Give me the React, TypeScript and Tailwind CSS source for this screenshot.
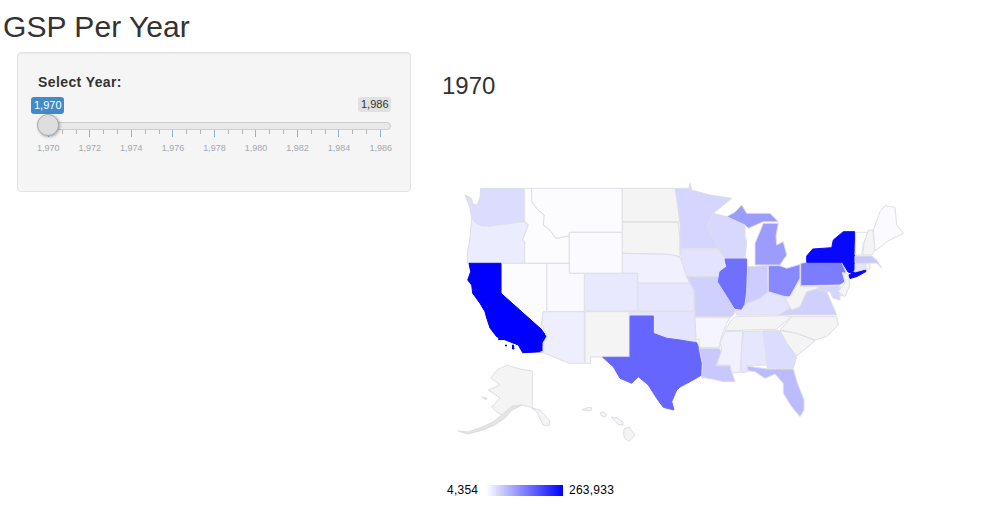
const years = ["1,970", "1,972", "1,974", "1,976", "1,978", "1,980", "1,982", "1,984", "1,986"];
const ticks = Array.from({ length: 25 }, (_, i) => i);

type Region = { id: string; fill: string; points: string; solid?: boolean };

// page coordinates, the svg viewBox below starts at the map's corner
const regions: Region[] = [
  { id: "WA", fill: "#dcdcff", points: "465,195 471,198 473,204 477,205 480,198 480.7,188.3 524,188.3 524,221.7 505,224 490,226 481.7,226 476,223 471.7,218 470,208" },
  { id: "OR", fill: "#ececff", points: "471.7,218 476,223 481.7,226 490,226 505,224 524,221.7 528.3,225 522.7,240 524.7,241.7 524.7,263.3 467.3,263.3 467.3,253.3 470,238" },
  { id: "ID", fill: "#fcfcff", points: "524.7,188.3 531.7,188.3 531.7,201.7 538,210 544.3,215 543.3,225 550,230 556,238.3 569.3,235.7 569.3,263.3 524.7,263.3 524.7,241.7 522.7,240 528.3,225 524.7,221" },
  { id: "MT", fill: "#fcfcff", points: "531.7,188.3 622.3,188.3 622.3,232.3 569.3,232.3 569.3,235.7 556,238.3 550,230 543.3,225 544.3,215 538,210 531.7,201.7" },
  { id: "WY", fill: "#fbfbff", points: "569.3,232.3 622.3,232.3 622.3,273.3 569.3,273.3" },
  { id: "ND", fill: "#f4f4f4", points: "622.3,188.3 675,188.3 677,200 680,221.7 622.3,221.7" },
  { id: "SD", fill: "#f4f4f4", points: "622.3,222.3 678.3,222.3 680,240 680,256.7 673,255 666.7,254.3 622.3,253.3" },
  { id: "NE", fill: "#f0f0ff", points: "622.3,253.3 666.7,254.3 673,255 680,257.7 684,265 687,277 690,283.3 637.7,283.3 637.7,273.3 622.3,273.3" },
  { id: "KS", fill: "#e6e6ff", points: "637.7,283.3 690,283.3 694,290 694,311 637.7,311" },
  { id: "CO", fill: "#e8e8ff", points: "584.3,273.3 637.7,273.3 637.7,311 584.3,311" },
  { id: "UT", fill: "#f9f9ff", points: "546.7,263.3 569.3,263.3 569.3,273.3 584.3,273.3 584.3,311.7 546.7,311.7" },
  { id: "NV", fill: "#fcfcff", points: "501,263.3 546.7,263.3 546.7,311.7 543,312 541.7,323 541,329 501,293.3" },
  { id: "CA", fill: "#0000ff", solid: true, points: "469,263.3 501,263.3 501,293.3 541,329 546.7,336.7 543,343 542.7,351.7 522.7,352.7 518.3,345 508,341 496.7,336.7 490,328 486.7,318 485,311.7 480,303.3 472.7,293.3 471.7,285 467.7,280 470.7,271.7" },
  { id: "CA1", fill: "#0000ff", solid: true, points: "498.5,338.5 504,338.5 504,339.5 498.5,339.5" },
  { id: "CA2", fill: "#0000ff", solid: true, points: "505.5,345 506.5,345 506.5,346 505.5,346" },
  { id: "CA3", fill: "#0000ff", solid: true, points: "512.5,345 513.5,345 514,349 512.5,349" },
  { id: "AZ", fill: "#eeeeff", points: "546.7,311.7 584.3,311.7 584.3,363.3 569.3,363.3 540.7,351.7 543,351.7 543,343 546.7,336.7 541.7,323.3 543,312" },
  { id: "NM", fill: "#f4f4f4", points: "585,311.7 629.3,311.7 629.3,356.7 590.7,357 590.7,363.3 585,363.3" },
  { id: "OK", fill: "#e4e4ff", points: "630,311.7 694,311.7 695,317.7 696,342 690,341.7 678,340 666.7,338.3 653.3,333.3 653.3,316 630,316" },
  { id: "TX", fill: "#6666ff", solid: true, points: "630,316 653.3,316 653.3,333.3 666.7,338.3 680,340 690,341.7 696.7,342.7 699,348 702,363 701.7,375 690,381.7 680,387 676.7,390 671.7,401.7 674,410 663.3,407.3 656.7,398.3 648.3,385 638.3,376.7 631.7,383.3 620,378.3 613.3,366.7 602.7,357.3 630,357.3" },
  { id: "MN", fill: "#d5d5ff", points: "675,188.3 689,188.3 690,183.3 691.7,190 710,195 731.7,198.3 713.3,213.3 707.3,226.7 712,235 718.3,248.3 680,248.3 680,221.7 677,200" },
  { id: "IA", fill: "#e3e3ff", points: "680,249 718.3,249 725,258.3 726.7,266.7 720,271.7 718.3,276.7 686.7,276.7 681.7,261.7" },
  { id: "MO", fill: "#d0d0ff", points: "686.7,276.7 718.3,276.7 718.3,281.7 726.7,295 735,308.3 735,312 733.3,315 730,318 730,316.7 695,316.7 694,290" },
  { id: "AR", fill: "#f5f5ff", points: "695,317.7 730,317.7 726.7,323.3 722,335 719.3,347.3 699,347.3 699,339.3 696,339.3" },
  { id: "LA", fill: "#c8c8ff", points: "699,348.3 719.3,348.3 721.7,353.3 716,365.7 730,365.7 731.7,372 735,381.7 723.3,381.7 712,379 701.7,377.3 702.3,363.3" },
  { id: "WI", fill: "#d8d8ff", points: "713.3,213.3 726.7,216.7 745,225 745,236.7 746.7,241.7 745,258.3 725,258.3 718.3,248.3 712,235 707.3,226.7" },
  { id: "MIU", fill: "#9c9cff", points: "726.7,216.7 735,212 741.7,205 746.7,213.3 770,213.3 778.3,221.7 763.3,221.7 748.3,228.3 745,225" },
  { id: "MIL", fill: "#9c9cff", points: "755,265 755,243.3 763.3,223.3 778.3,223.3 776,236 776.7,245 783.3,241.7 786.7,255 780,265" },
  { id: "IL", fill: "#7070ff", solid: true, points: "725,259 746.7,259 746.7,291.7 745,304 741.7,310 735,308.3 726.7,295 718.3,281.7 720,271.7 726.7,266.7" },
  { id: "IN", fill: "#ccccff", points: "747.7,266.7 767.3,265.7 768.3,291.7 760,298.3 745,304.3 746.7,291.7" },
  { id: "OH", fill: "#8888ff", points: "768.3,265.7 780,265.7 786.7,268.3 800,264.3 800,278.3 790,296.7 785,296.7 768.3,291.7" },
  { id: "KY", fill: "#e4e4ff", points: "745,304.3 760,299 768.3,292 785,298 790,308 778.3,315 736.7,315 735,310 741.7,310" },
  { id: "TN", fill: "#f4f4f4", points: "730,321.7 735,316.7 783.3,315.7 791.7,316.7 780,326 776.7,329.3 725,330.7" },
  { id: "NC", fill: "#f4f4f4", points: "791.7,316.7 836.7,316.7 838.3,325 826.7,336.7 815,340 796.7,333.3 780,330" },
  { id: "SC", fill: "#f4f4f4", points: "780,330.7 796.7,333.3 815,340.7 796.7,356 786.7,343.3" },
  { id: "GA", fill: "#dcdcff", points: "762.7,330.7 779.3,330.7 786.7,343.3 796.7,356.7 793.3,368.3 767.3,368.3 766,353.3" },
  { id: "AL", fill: "#e6e6ff", points: "743.3,331.7 762.7,331 766,353.3 766.7,365 746.7,365.7 748.3,371.7 741.7,372.7 740.7,356.7" },
  { id: "MS", fill: "#f0f0ff", points: "725,331.7 742.7,331 740,372.7 731.7,372.7 730,365 716.7,365 721.7,350 720,342" },
  { id: "FL", fill: "#bbbbff", points: "746.7,366 767.3,369 793.3,369 797,382 804,400 804,410 800,416.7 791.7,406.7 783.3,393.3 783.3,383.3 775,374 765,378.3 755,371.7 748.3,370.7" },
  { id: "VA", fill: "#d0d0ff", points: "778.3,315 790,308.3 797,308 806.7,292 816.7,288.3 826.7,291.7 833.3,306.7 836.7,315" },
  { id: "WV", fill: "#f4f4f4", points: "800,279 800.7,286.7 818.3,286.7 816.7,289 806.7,291.7 800,306.7 791.7,310 785,298.3 790,296.7" },
  { id: "PA", fill: "#7c7cff", points: "800.7,263.3 806.7,262.3 841.7,262.3 845.7,271.7 845,281.7 840,285 800.7,285.7" },
  { id: "MD", fill: "#d4d4ff", points: "818.3,286.7 839,285.7 840,300 833,298 830,291.7 818.3,290" },
  { id: "DE", fill: "#e8e8ff", points: "840,285.7 843,295.7 839,295.7" },
  { id: "NJ", fill: "#f4f4f4", points: "842.3,272.3 848.3,274.3 850,285 845,296.7 838.3,291.7 845,282.3" },
  { id: "NY", fill: "#0808ff", solid: true, points: "806.7,262.3 806.7,256 812.7,249 831.7,247.7 833.3,240 843.3,231.7 854.7,231.7 854.7,269 852,273 848,272 842.3,262.3" },
  { id: "LI", fill: "#0808ff", solid: true, points: "849,275 853,272.5 865.7,270 866,271.5 857,276.5 850,278.5" },
  { id: "VT", fill: "#ffffff", points: "855.7,232.3 868.3,232.3 863.3,243.3 861.7,255 855,255" },
  { id: "NH", fill: "#f4f4f4", points: "868.3,230 873,230 875,250 871.7,255 862.7,255 864,243" },
  { id: "ME", fill: "#fafaff", points: "873.3,230 880,211.7 885,205.7 895,207.3 896.7,225 903.3,233.3 886.7,241.7 876.7,250 875,250" },
  { id: "MA", fill: "#c8c8ff", points: "855,256 871.7,256 876.7,260 881.7,268 876.7,263 855,263.3" },
  { id: "CT", fill: "#e4e4ff", points: "855,263.7 865.7,263.7 865.7,269 855,272" },
  { id: "RI", fill: "#f4f4f4", points: "865.7,263.7 870,263.7 870,269 865.7,269" },
  { id: "AK", fill: "#f4f4f4", points: "506.7,365 520,369 532.3,371 532.3,408 540,410 550,421 549,426 543,425 537,412 530,407 522,405 510,411 505,416 498,413 491.7,407 500,398 488.3,390 500,385 490.7,378 497,370" },
  { id: "AK2", fill: "#e4e4e4", points: "522,405 512,410 505,418 495,425 483,430 468,434 458,431 468,432 482,427 493,422 503,414 512,406" },
  { id: "AK3", fill: "#e4e4e4", points: "482,397 487,398 486,400" },
  { id: "HI1", fill: "#f4f4f4", points: "582,409.5 586,408.5 588,407.3 591.7,407.8 591,410.5 587,410.7" },
  { id: "HI2", fill: "#f4f4f4", points: "600,413 604,412 606.7,415 605,417 601,415.5" },
  { id: "HI3", fill: "#f4f4f4", points: "611,417 617,418 623,422 623,425 618,424.5 614,420" },
  { id: "HI4", fill: "#f4f4f4", points: "624,429 629,427 635,435 629,441.5 624.5,438 623.5,434" },
];

function Slider() {
  return (
    <div className="relative mt-[5px]">
      <div className="flex justify-between">
        <span className="rounded-[3px] bg-[#428bca] px-[3px] h-[17px] w-[33px] -ml-[7px] text-[11px] leading-[16px] text-center text-white">1,970</span>
        <span className="rounded-[3px] bg-[#e1e1e1] px-[3px] h-[15px] w-[33px] text-[11px] leading-[15px] text-center text-[#333]">1,986</span>
      </div>
      <div className="mt-[8px] h-[8px] rounded-[4px] border border-[#cccccc] bg-[#e9e9e9]" />
      <div className="absolute left-[-1px] top-[17px] h-[22px] w-[22px] rounded-full border border-[#ababab] bg-[#dedede] shadow-[1px_1px_3px_rgba(0,0,0,0.3)]" />
      <div className="ml-[10px] mr-[10px] flex h-[7px] justify-between">
        {ticks.map((t) => (
          <div key={t} className={t % 3 === 0 ? "h-[7px] w-px bg-[#8db4d8]" : "h-[4px] w-px bg-[#b5b5b5]"} />
        ))}
      </div>
      <div className="ml-[-1px] mr-[-1px] mt-[4px] flex justify-between text-[9px] leading-[14px] text-[#a3a9af]">
        {years.map((y) => (
          <span key={y}>{y}</span>
        ))}
      </div>
    </div>
  );
}

function UsMap() {
  return (
    <svg viewBox="440 175 480 275" className="block h-[275px] w-[480px]">
      {regions.map((r) => (
        <polygon
          key={r.id}
          points={r.points}
          fill={r.fill}
          stroke={r.solid ? r.fill : "#dedee4"}
          strokeWidth={1}
          strokeLinejoin="round"
        />
      ))}
    </svg>
  );
}

export default function App() {
  return (
    <div className="h-[530px] w-[983px] overflow-hidden bg-white font-['Liberation_Sans',Arial,sans-serif] text-[#333]">
      <h2 className="pl-[3px] pt-[10px] text-[30px] leading-[33px] tracking-[0.05px]">GSP Per Year</h2>
      <div className="mt-[9px] flex">
        <div className="ml-[17px] h-[140px] w-[394px] rounded-[4px] border border-[#e3e3e3] bg-[#f5f5f5] pl-[20px] pr-[19px] pt-[19px] shadow-[inset_0_1px_1px_rgba(0,0,0,0.05)]">
          <label className="block text-[14px] font-bold leading-[20px] tracking-[0.4px]">Select Year:</label>
          <Slider />
        </div>
        <div className="ml-[31px] flex flex-col">
          <h3 className="mt-[21px] text-[24px] leading-[26px]">1970</h3>
          <div className="-ml-[2px] mt-[76px]">
            <UsMap />
          </div>
          <div className="mt-[33px] flex items-center text-[12px] leading-[14px] tracking-[0.25px] text-black">
            <span className="ml-[5px] w-[39px]">4,354</span>
            <div className="h-[11px] w-[77px] bg-linear-to-r/srgb from-white to-[#0000ff]" />
            <span className="ml-[6px]">263,933</span>
          </div>
        </div>
      </div>
    </div>
  );
}
